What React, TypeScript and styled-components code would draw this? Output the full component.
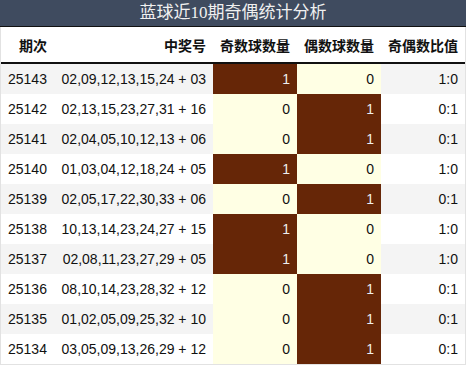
import React from "react";
import styled, { createGlobalStyle } from "styled-components";

const Global = createGlobalStyle`
  html, body { margin: 0; padding: 0; background: #fff; }
  body { font-family: "Liberation Sans", "Noto Sans CJK SC", sans-serif; }
`;

const Wrap = styled.div`
  width: 466px;
  box-sizing: border-box;
  border: 1px solid #e2e2e2;
  border-top: none;
`;

const Title = styled.div`
  height: 26px;
  background: #3f4b5f;
  border-bottom: 1px solid #111;
  color: #f0f0f0;
  font-family: "Liberation Serif", "Noto Sans CJK SC", serif;
  font-size: 17px;
  line-height: 26px;
  text-align: center;
  margin: 0 -1px;
`;

const Grid = styled.div`
  display: grid;
  grid-template-columns: 56px 156px 84px 84px 84px;
`;

const Head = styled.div<{ $left?: boolean }>`
  height: 35px;
  border-bottom: 2px solid #111;
  display: flex;
  align-items: center;
  justify-content: ${(p) => (p.$left ? "flex-start" : "flex-end")};
  padding: ${(p) => (p.$left ? "0 0 0 18px" : "0 7px 0 0")};
  font-family: "Noto Sans CJK SC", sans-serif;
  font-weight: bold;
  font-size: 14px;
  color: #111;
`;

type Tone = "row" | "hot" | "cold";

const Cell = styled.div<{ $tone: Tone; $alt: boolean; $left?: boolean }>`
  height: 30px;
  display: flex;
  align-items: center;
  justify-content: ${(p) => (p.$left ? "flex-start" : "flex-end")};
  padding: ${(p) => (p.$left ? "0 0 0 7px" : "0 7px 0 0")};
  font-size: 14px;
  background: ${(p) =>
    p.$tone === "hot" ? "#662607" : p.$tone === "cold" ? "#ffffe4" : p.$alt ? "#f4f4f4" : "#ffffff"};
  color: ${(p) => (p.$tone === "hot" ? "#eee" : "#111")};
`;

const rows: [string, string, number][] = [
  ["25143", "02,09,12,13,15,24 + 03", 1],
  ["25142", "02,13,15,23,27,31 + 16", 0],
  ["25141", "02,04,05,10,12,13 + 06", 0],
  ["25140", "01,03,04,12,18,24 + 05", 1],
  ["25139", "02,05,17,22,30,33 + 06", 0],
  ["25138", "10,13,14,23,24,27 + 15", 1],
  ["25137", "02,08,11,23,27,29 + 05", 1],
  ["25136", "08,10,14,23,28,32 + 12", 0],
  ["25135", "01,02,05,09,25,32 + 10", 0],
  ["25134", "03,05,09,13,26,29 + 12", 0],
];

export default function App() {
  return (
    <>
      <Global />
      <Wrap>
        <Title>蓝球近10期奇偶统计分析</Title>
        <Grid>
          <Head $left>期次</Head>
          <Head>中奖号</Head>
          <Head>奇数球数量</Head>
          <Head>偶数球数量</Head>
          <Head>奇偶数比值</Head>
          {rows.map(([p, n, odd], i) => {
            const alt = i % 2 === 0;
            return (
              <React.Fragment key={p}>
                <Cell $tone="row" $alt={alt} $left>{p}</Cell>
                <Cell $tone="row" $alt={alt}>{n}</Cell>
                <Cell $tone={odd ? "hot" : "cold"} $alt={alt}>{odd}</Cell>
                <Cell $tone={odd ? "cold" : "hot"} $alt={alt}>{1 - odd}</Cell>
                <Cell $tone="row" $alt={alt}>{odd ? "1:0" : "0:1"}</Cell>
              </React.Fragment>
            );
          })}
        </Grid>
      </Wrap>
    </>
  );
}
